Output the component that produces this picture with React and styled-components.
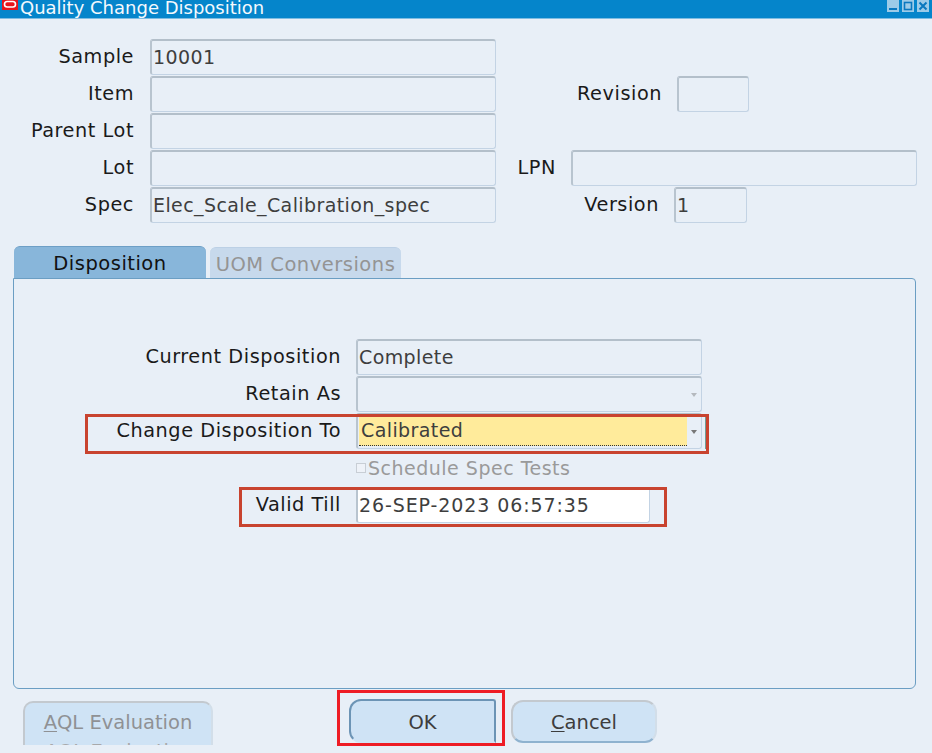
import React from "react";
import styled, { createGlobalStyle } from "styled-components";

const Global = createGlobalStyle`
  html, body { margin: 0; padding: 0; background: #e8eff7; }
  body { font-family: "DejaVu Sans", Verdana, sans-serif; overflow: hidden; }
`;

const Win = styled.div`
  position: relative;
  width: 932px;
  height: 753px;
  overflow: hidden;
  background: #e8eff7;
`;
const TitleBar = styled.div`
  display: flex;
  align-items: flex-start;
  height: 18px;
  background: #0585cb;
  border-bottom: 1px solid #7fbde2;
  color: #f4f9fd;
  font-size: 18px;
  line-height: 16px;
  padding-left: 2px;
  overflow: hidden;
`;
const TitleIcon = styled.svg`
  flex: none;
  width: 16px;
  height: 10px;
  margin-right: 2px;
`;
const TitleText = styled.span`
  flex: 1;
  white-space: nowrap;
`;
const WinButtons = styled.div`
  display: flex;
  gap: 3px;
  margin-right: 3px;
`;
const WinBtn = styled.svg`
  width: 12px;
  height: 12px;
`;
const Form = styled.div`
  display: flex;
  flex-direction: column;
  padding-top: 19px;
`;
const Row = styled.div`
  display: flex;
  align-items: center;
  height: ${(p) => p.$h || 37}px;
`;
const Label = styled.label`
  flex: none;
  width: ${(p) => p.$w}px;
  margin-right: ${(p) => p.$gap ?? 15}px;
  text-align: right;
  font-size: 19.3px;
  letter-spacing: 0.55px;
  color: #1a1a1a;
  white-space: nowrap;
`;
const Field = styled.div`
  position: relative;
  box-sizing: border-box;
  flex: none;
  display: flex;
  align-items: center;
  width: ${(p) => p.$w}px;
  height: ${(p) => p.$h || 36}px;
  padding-left: ${(p) => p.$pl ?? 1}px;
  padding-bottom: 1px;
  border: 1px solid #c3d3e4;
  border-top: 2px solid #b3bfca;
  border-left: 2px solid #b8c4cf;
  border-radius: 3px;
  background: ${(p) => p.$bg || "#e8eff7"};
  color: #3e3e3e;
  font-size: 19px;
  letter-spacing: ${(p) => p.$ls ?? 0.4}px;
  white-space: nowrap;
`;
const Highlight = styled.div`
  flex: none;
  box-sizing: border-box;
  width: 328px;
  height: 30px;
  margin-top: 1px;
  padding: 0 2px;
  line-height: 28px;
  background: #ffeb9b;
  border-bottom: 1px dotted #333;
`;
const Arrow = styled.span`
  position: absolute;
  right: 4px;
  top: 50%;
  margin-top: -1px;
  border-left: 3.5px solid transparent;
  border-right: 3.5px solid transparent;
  border-top: 4px solid ${(p) => p.$c || "#b5b9be"};
`;
const TabStrip = styled.div`
  display: flex;
  align-items: flex-end;
  gap: 4px;
  height: 32px;
  margin-top: 23px;
  padding-left: 14px;
`;
const Tab = styled.div`
  box-sizing: border-box;
  width: ${(p) => p.$w}px;
  height: ${(p) => p.$active ? 32 : 31}px;
  text-align: center;
  line-height: 33px;
  font-size: 19.5px;
  letter-spacing: 0.5px;
  border-radius: 6px 6px 0 0;
  background: ${(p) => p.$active ? "#88b6da" : "#c7d9ec"};
  color: ${(p) => p.$active ? "#111" : "#949494"};
  border-top: 1px solid ${(p) => p.$active ? "#6d9fc6" : "#bcd0e5"};
`;
const Panel = styled.div`
  box-sizing: border-box;
  width: 903px;
  height: 411px;
  margin: 0 0 0 13px;
  padding-top: 59px;
  border: 1px solid #6b9ec3;
  border-radius: 0 4px 6px 6px;
  display: flex;
  flex-direction: column;
`;
const CheckRow = styled.div`
  display: flex;
  align-items: center;
  height: 37px;
  padding-left: 342px;
  font-size: 19px;
  letter-spacing: 0.5px;
  color: #9a9a9a;
`;
const Check = styled.span`
  box-sizing: border-box;
  width: 10px;
  height: 10px;
  margin-right: 2px;
  border: 1px solid #c8ced5;
  background: #eef2f8;
`;
const Footer = styled.div`
  display: flex;
  align-items: flex-start;
  padding: 12px 0 0 23px;
`;
const Button = styled.div`
  position: relative;
  box-sizing: border-box;
  flex: none;
  width: ${(p) => p.$w}px;
  height: ${(p) => p.$h}px;
  margin-right: ${(p) => p.$mr || 0}px;
  margin-top: ${(p) => p.$mt || 0}px;
  padding-top: ${(p) => p.$clip ? 0 : 2}px;
  padding-bottom: ${(p) => p.$clip ? 3 : 0}px;
  overflow: hidden;
  display: flex;
  align-items: center;
  justify-content: center;
  font-size: 19.5px;
  color: ${(p) => p.$dim ? "#8f9194" : "#3d3d3d"};
  background: #cfe3f5;
  border: 2px solid ${(p) => p.$focus ? "#6c94b5" : "#c3c9cf"};
  border-right-color: ${(p) => p.$focus ? "#6c94b5" : "#d2dee9"};
  border-bottom-color: ${(p) => p.$focus ? "#cfe3f5" : "#8fb2cf"};
  border-radius: 12px ${(p) => p.$focus ? "3px" : "12px"} ${(p) => p.$focus ? "0" : "12px"} 12px;
  ${(p) => p.$clip && "border-bottom: 0; border-radius: 10px 10px 0 0;"}
`;
const Ghost = styled.span`
  position: absolute;
  left: 20px;
  top: 37px;
  color: #a8a9ab;
`;
const U = styled.span`
  text-decoration: underline;
  text-underline-offset: 2px;
`;
const Mark = styled.div`
  position: absolute;
  box-sizing: border-box;
  left: ${(p) => p.$x}px;
  top: ${(p) => p.$y}px;
  width: ${(p) => p.$w}px;
  height: ${(p) => p.$h}px;
  border: 3px solid ${(p) => p.$c || "#c8432f"};
  pointer-events: none;
`;
const Sliver = styled.div`
  position: absolute;
  left: 705px;
  top: 417px;
  width: 2px;
  height: 32px;
  background: #6f9f98;
`;

export default function App() {
  return (
    <Win>
      <Global />
      <TitleBar>
        <TitleIcon viewBox="0 0 16 10">
          <rect width="16" height="10" fill="#e8141c" />
          <rect x="2.5" y="1.5" width="11" height="5.5" rx="2.7" fill="none" stroke="#fff" strokeWidth="1.6" />
        </TitleIcon>
        <TitleText>Quality Change Disposition</TitleText>
        <WinButtons>
          <WinBtn viewBox="0 0 12 12">
            <rect width="12" height="12" fill="#9ccbe8" />
            <rect x="2" y="8" width="8" height="2" fill="#0a78bf" />
          </WinBtn>
          <WinBtn viewBox="0 0 12 12">
            <rect width="12" height="12" fill="#9ccbe8" />
            <rect x="2.5" y="2.5" width="7" height="7" fill="none" stroke="#0a78bf" strokeWidth="1.6" />
          </WinBtn>
          <WinBtn viewBox="0 0 12 12">
            <rect width="12" height="12" fill="#9ccbe8" />
            <path d="M2.5 2.5 9.5 9.5M9.5 2.5 2.5 9.5" stroke="#0a78bf" strokeWidth="2" />
          </WinBtn>
        </WinButtons>
      </TitleBar>
      <Form>
        <Row>
          <Label $w={134} $gap={16}>Sample</Label>
          <Field $w={346}>10001</Field>
        </Row>
        <Row>
          <Label $w={134} $gap={16}>Item</Label>
          <Field $w={346} />
          <Label $w={166}>Revision</Label>
          <Field $w={72} />
        </Row>
        <Row>
          <Label $w={134} $gap={16}>Parent Lot</Label>
          <Field $w={346} />
        </Row>
        <Row>
          <Label $w={134} $gap={16}>Lot</Label>
          <Field $w={346} />
          <Label $w={60}>LPN</Label>
          <Field $w={346} />
        </Row>
        <Row>
          <Label $w={134} $gap={16}>Spec</Label>
          <Field $w={346}>Elec_Scale_Calibration_spec</Field>
          <Label $w={163}>Version</Label>
          <Field $w={73}>1</Field>
        </Row>
      </Form>
      <TabStrip>
        <Tab $active $w={192}>Disposition</Tab>
        <Tab $w={191}>UOM Conversions</Tab>
      </TabStrip>
      <Panel>
        <Row>
          <Label $w={327} $gap={15}>Current Disposition</Label>
          <Field $w={346}>Complete</Field>
        </Row>
        <Row>
          <Label $w={327} $gap={15}>Retain As</Label>
          <Field $w={346}><Arrow /></Field>
        </Row>
        <Row>
          <Label $w={327} $gap={15}>Change Disposition To</Label>
          <Field $w={346} $pl={1}>
            <Highlight>Calibrated</Highlight>
            <Arrow $c="#777" />
          </Field>
        </Row>
        <CheckRow><Check />Schedule Spec Tests</CheckRow>
        <Row>
          <Label $w={327} $gap={15}>Valid Till</Label>
          <Field $w={294} $bg="#fff" $ls={0.9}>26-SEP-2023 06:57:35</Field>
        </Row>
      </Panel>
      <Footer>
        <Button $w={190} $h={44} $mr={136} $clip $dim>
          <U>A</U>QL Evaluation
          <Ghost>AQL Evaluation</Ghost>
        </Button>
        <Button $w={147} $h={44} $mr={15} $mt={-2} $focus>OK</Button>
        <Button $w={146} $h={43} $mt={-1}><U>C</U>ancel</Button>
      </Footer>
      <Sliver />
      <Mark $x={85} $y={414} $w={624} $h={40} />
      <Mark $x={239} $y={487} $w={428} $h={40} />
      <Mark $x={337} $y={690} $w={168} $h={56} $c="#ee1c25" />
    </Win>
  );
}
